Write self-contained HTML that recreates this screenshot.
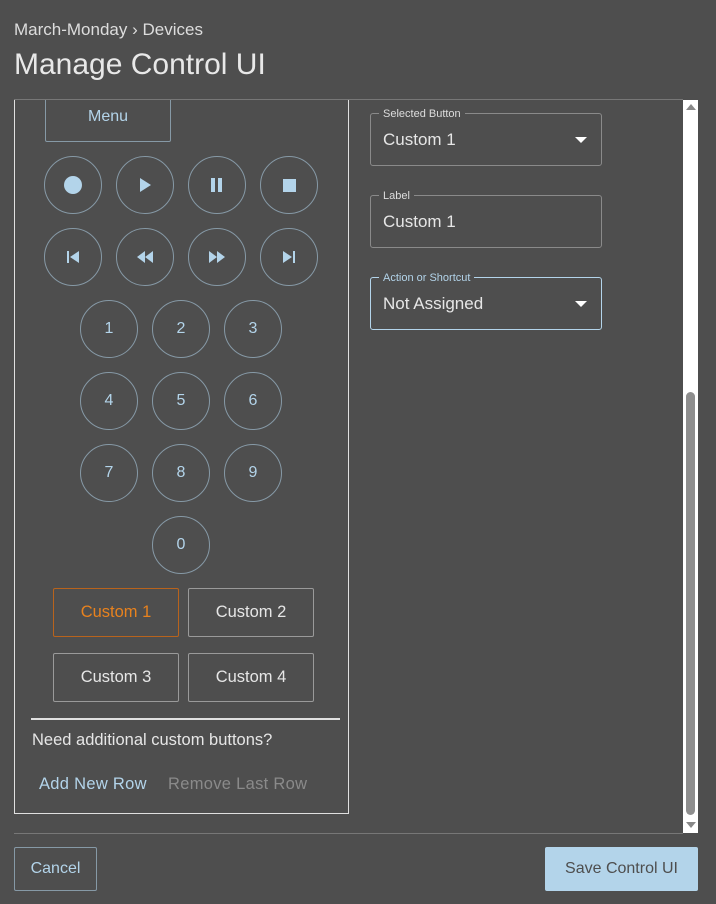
<!DOCTYPE html>
<html><head><style>
body{margin:0;width:716px;height:904px;background:#4e4e4e;font-family:"Liberation Sans",sans-serif;position:relative;overflow:hidden;color:#ddd}
.a{position:absolute}
.c{position:absolute;width:56px;height:56px;border:1px solid #8699a6;border-radius:50%;display:flex;align-items:center;justify-content:center;color:#b3d4ea;font-size:16px}
.b{position:absolute;width:124px;height:47px;border:1px solid #9a9a9a;border-radius:2px;display:flex;align-items:center;justify-content:center;font-size:16.5px;color:#e6e6e6}
.f{position:absolute;left:370px;width:230px;height:51px;border:1px solid #8a8a8a;border-radius:3px}
.f .l{position:absolute;top:-6px;left:8px;background:#4e4e4e;padding:0 4px;font-size:11px;line-height:12px;color:#ddd}
.f .v{position:absolute;left:12px;top:16px;font-size:17px;color:#e6e6e6}
.f .t{position:absolute;right:14px;top:23px;width:0;height:0;border-left:6px solid transparent;border-right:6px solid transparent;border-top:6px solid #fff}
</style></head><body>
<div class="a" style="left:14px;top:20px;font-size:17px;color:#ddd">March-Monday › Devices</div>
<div class="a" style="left:14px;top:48px;font-size:30px;color:#e8e8e8">Manage Control UI</div>
<div class="a" style="left:14px;top:99px;width:669px;height:1px;background:#777"></div>
<div class="a" style="left:14px;top:100px;width:333px;height:713px;border:1px solid #e0e0e0;border-top:none;overflow:hidden">
<div class="a" style="left:30px;top:-8px;width:124px;height:48px;border:1px solid #8699a6;border-radius:2px;color:#b3d4ea;font-size:16px;text-align:center;line-height:48px">Menu</div>
</div>
<div class="c" style="left:44px;top:156px"><div style="width:18px;height:18px;border-radius:50%;background:#b3d4ea"></div></div>
<div class="c" style="left:116px;top:156px"><svg width="14" height="14"><path d="M2 0L13 7L2 14Z" fill="#b3d4ea"/></svg></div>
<div class="c" style="left:188px;top:156px"><svg width="14" height="14"><rect x="1" y="0" width="4" height="14" fill="#b3d4ea"/><rect x="8" y="0" width="4" height="14" fill="#b3d4ea"/></svg></div>
<div class="c" style="left:260px;top:156px"><div style="width:13px;height:13px;background:#b3d4ea"></div></div>
<div class="c" style="left:44px;top:228px"><svg width="14" height="14"><rect x="1" y="1" width="2" height="12" fill="#b3d4ea"/><path d="M4 7L13 1V13Z" fill="#b3d4ea"/></svg></div>
<div class="c" style="left:116px;top:228px"><svg width="18" height="14"><path d="M1 7L9 1V13ZM9 7L17 1V13Z" fill="#b3d4ea"/></svg></div>
<div class="c" style="left:188px;top:228px"><svg width="18" height="14"><path d="M1 1L9 7L1 13ZM9 1L17 7L9 13Z" fill="#b3d4ea"/></svg></div>
<div class="c" style="left:260px;top:228px"><svg width="14" height="14"><path d="M1 1L10 7L1 13Z" fill="#b3d4ea"/><rect x="11" y="1" width="2" height="12" fill="#b3d4ea"/></svg></div>
<div class="c" style="left:80px;top:300px">1</div><div class="c" style="left:152px;top:300px">2</div><div class="c" style="left:224px;top:300px">3</div>
<div class="c" style="left:80px;top:372px">4</div><div class="c" style="left:152px;top:372px">5</div><div class="c" style="left:224px;top:372px">6</div>
<div class="c" style="left:80px;top:444px">7</div><div class="c" style="left:152px;top:444px">8</div><div class="c" style="left:224px;top:444px">9</div>
<div class="c" style="left:152px;top:516px">0</div>
<div class="b" style="left:53px;top:588px;border-color:#b8631c;color:#e8821e">Custom 1</div>
<div class="b" style="left:188px;top:588px">Custom 2</div>
<div class="b" style="left:53px;top:653px">Custom 3</div>
<div class="b" style="left:188px;top:653px">Custom 4</div>
<div class="a" style="left:31px;top:718px;width:309px;height:2px;background:#e0e0e0"></div>
<div class="a" style="left:32px;top:731px;font-size:16.5px;color:#e6e6e6">Need additional custom buttons?</div>
<div class="a" style="left:39px;top:775px;font-size:16.5px;color:#b3d4ea;letter-spacing:0.3px">Add New Row</div>
<div class="a" style="left:168px;top:775px;font-size:16.5px;color:#8a8a8a;letter-spacing:0.3px">Remove Last Row</div>
<div class="f" style="top:113px"><span class="l">Selected Button</span><span class="v">Custom 1</span><span class="t"></span></div>
<div class="f" style="top:195px"><span class="l">Label</span><span class="v">Custom 1</span></div>
<div class="f" style="top:277px;border-color:#b3d4ea"><span class="l" style="color:#b3d4ea">Action or Shortcut</span><span class="v">Not Assigned</span><span class="t"></span></div>
<div class="a" style="left:683px;top:100px;width:15px;height:733px;background:#fff"></div>
<div class="a" style="left:686px;top:104px;width:0;height:0;border-left:5px solid transparent;border-right:5px solid transparent;border-bottom:6px solid #888"></div>
<div class="a" style="left:686px;top:392px;width:9px;height:423px;background:#8e8e8e;border-radius:5px"></div>
<div class="a" style="left:686px;top:822px;width:0;height:0;border-left:5px solid transparent;border-right:5px solid transparent;border-top:6px solid #888"></div>
<div class="a" style="left:14px;top:833px;width:669px;height:1px;background:#777"></div>
<div class="a" style="left:14px;top:847px;width:81px;height:42px;border:1px solid #8699a6;border-radius:2px;color:#b3d4ea;font-size:16px;text-align:center;line-height:42px">Cancel</div>
<div class="a" style="left:545px;top:847px;width:153px;height:44px;background:#b3d4ea;border-radius:2px;color:#4e4e4e;font-size:16px;text-align:center;line-height:44px">Save Control UI</div>
</body></html>
